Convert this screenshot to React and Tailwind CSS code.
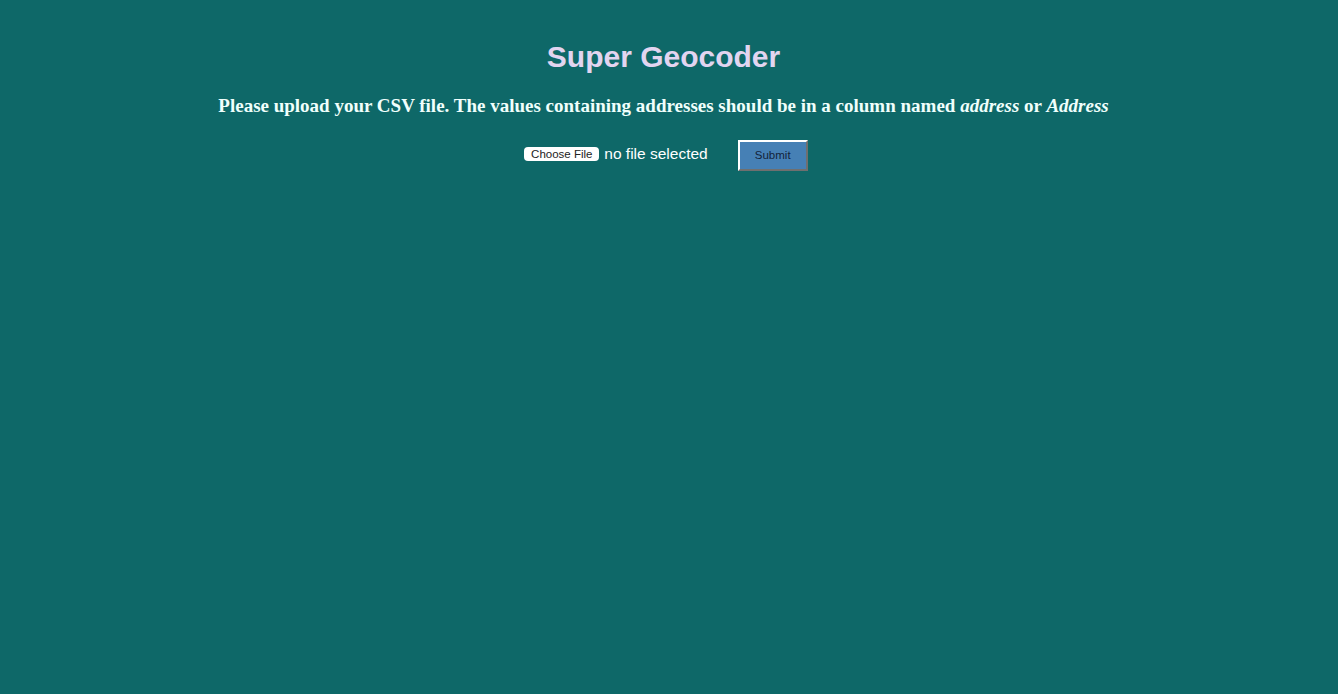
export default function App() {
  return (
    <div className="min-h-[694px] w-full bg-[#0e6868] flex flex-col items-center pr-[11px]">
      <h1
        className="mt-[38px] text-[30px] leading-[38px] font-bold text-[#e2d5f0]"
        style={{ fontFamily: '"Liberation Sans", Arial, sans-serif' }}
      >
        Super Geocoder
      </h1>
      <h3
        className="mt-[18px] text-[19px] leading-[24px] font-bold text-[#f0fffc]"
        style={{ fontFamily: '"Liberation Serif", "Times New Roman", serif' }}
      >
        Please upload your CSV file. The values containing addresses should be in a column named <i>address</i> or <i>Address</i>
      </h3>
      <div
        className="mt-[22px] ml-[5px] flex items-center"
        style={{ fontFamily: '"Liberation Sans", Arial, sans-serif' }}
      >
        <div className="flex items-center -mt-[3px]">
          <span className="h-[14px] w-[75px] bg-white rounded-[4px] text-[11.5px] leading-[14px] text-[#222] flex items-center justify-center">
            Choose File
          </span>
          <span className="ml-[5px] text-[15.5px] leading-[18px] text-white">no file selected</span>
        </div>
        <button className="ml-[30px] h-[31px] w-[70px] bg-[#4680b5] border-2 border-t-white border-l-white border-b-[#6f6f6f] border-r-[#6f6f6f] text-[11.5px] text-[#13233a]">
          Submit
        </button>
      </div>
    </div>
  );
}
